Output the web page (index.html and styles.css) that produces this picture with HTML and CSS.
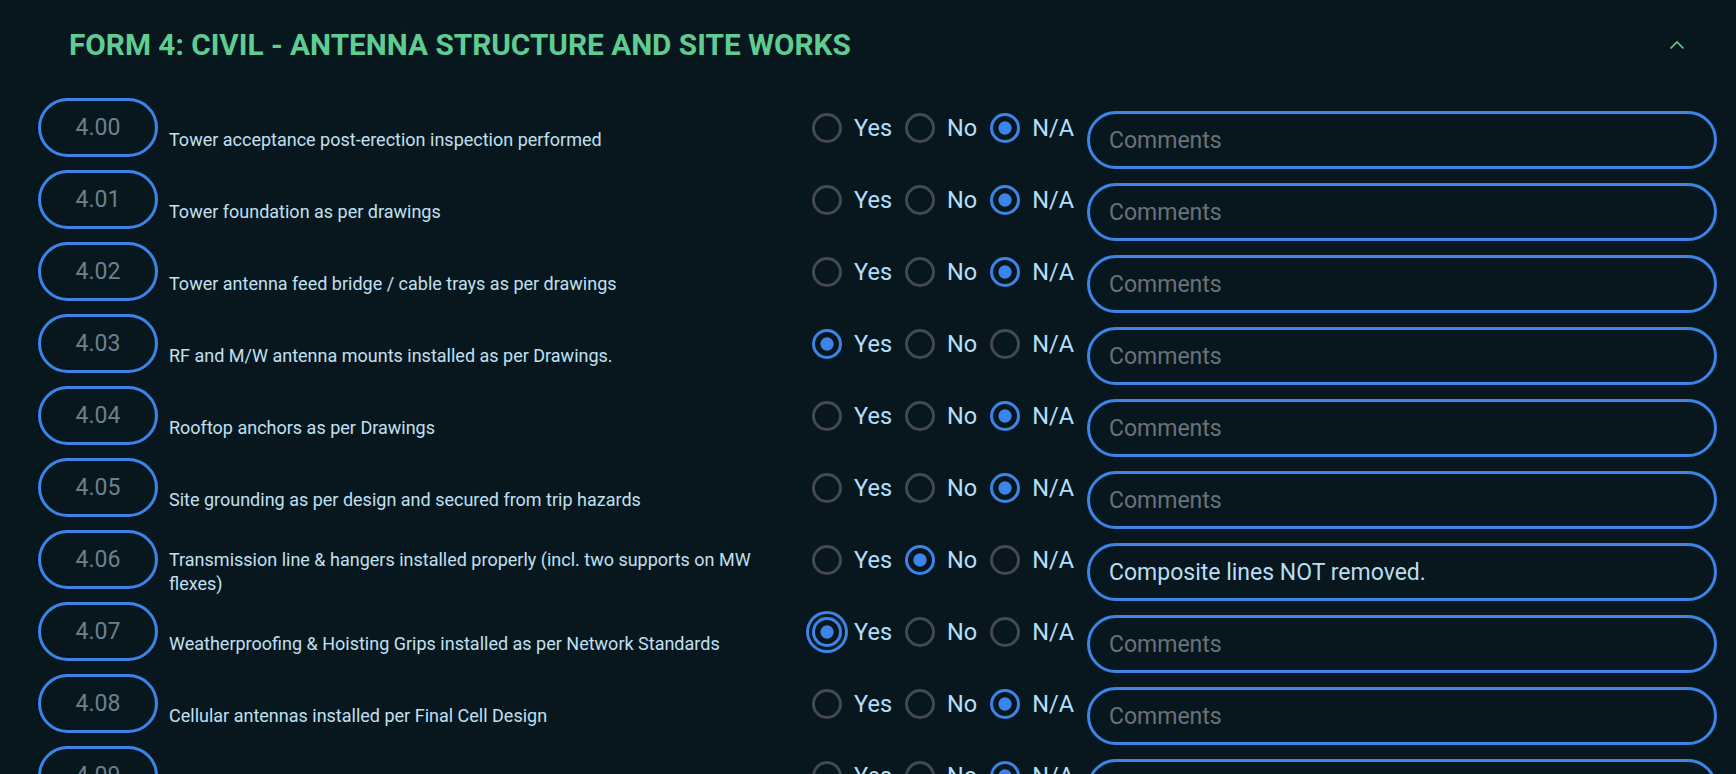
FILE: index.html
```html
<!DOCTYPE html>
<html lang="en">
<head>
<meta charset="utf-8">
<title>Form 4: Civil - Antenna Structure and Site Works</title>
<link rel="stylesheet" href="styles.css">
</head>
<body>
<section class="form">
  <header class="form-header">
    <h1 class="form-title">FORM 4: CIVIL - ANTENNA STRUCTURE AND SITE WORKS</h1>
    <svg class="chevron" width="16" height="10" viewBox="0 0 16 10"><path d="M1.5 8.5 L8 2 L14.5 8.5" fill="none" stroke="#5fcd92" stroke-width="1.6"/></svg>
  </header>
  <div class="rows">
    <div class="row">
      <div class="num">4.00</div>
      <div class="desc"><span>Tower acceptance post-erection inspection performed</span></div>
      <div class="choices">
        <label class="opt"><input type="radio" name="r0"><span>Yes</span></label>
        <label class="opt"><input type="radio" name="r0"><span>No</span></label>
        <label class="opt"><input type="radio" name="r0" checked><span>N/A</span></label>
      </div>
      <input class="comment" type="text" placeholder="Comments">
    </div>
    <div class="row">
      <div class="num">4.01</div>
      <div class="desc"><span>Tower foundation as per drawings</span></div>
      <div class="choices">
        <label class="opt"><input type="radio" name="r1"><span>Yes</span></label>
        <label class="opt"><input type="radio" name="r1"><span>No</span></label>
        <label class="opt"><input type="radio" name="r1" checked><span>N/A</span></label>
      </div>
      <input class="comment" type="text" placeholder="Comments">
    </div>
    <div class="row">
      <div class="num">4.02</div>
      <div class="desc"><span>Tower antenna feed bridge / cable trays as per drawings</span></div>
      <div class="choices">
        <label class="opt"><input type="radio" name="r2"><span>Yes</span></label>
        <label class="opt"><input type="radio" name="r2"><span>No</span></label>
        <label class="opt"><input type="radio" name="r2" checked><span>N/A</span></label>
      </div>
      <input class="comment" type="text" placeholder="Comments">
    </div>
    <div class="row">
      <div class="num">4.03</div>
      <div class="desc"><span>RF and M/W antenna mounts installed as per Drawings.</span></div>
      <div class="choices">
        <label class="opt"><input type="radio" name="r3" checked><span>Yes</span></label>
        <label class="opt"><input type="radio" name="r3"><span>No</span></label>
        <label class="opt"><input type="radio" name="r3"><span>N/A</span></label>
      </div>
      <input class="comment" type="text" placeholder="Comments">
    </div>
    <div class="row">
      <div class="num">4.04</div>
      <div class="desc"><span>Rooftop anchors as per Drawings</span></div>
      <div class="choices">
        <label class="opt"><input type="radio" name="r4"><span>Yes</span></label>
        <label class="opt"><input type="radio" name="r4"><span>No</span></label>
        <label class="opt"><input type="radio" name="r4" checked><span>N/A</span></label>
      </div>
      <input class="comment" type="text" placeholder="Comments">
    </div>
    <div class="row">
      <div class="num">4.05</div>
      <div class="desc"><span>Site grounding as per design and secured from trip hazards</span></div>
      <div class="choices">
        <label class="opt"><input type="radio" name="r5"><span>Yes</span></label>
        <label class="opt"><input type="radio" name="r5"><span>No</span></label>
        <label class="opt"><input type="radio" name="r5" checked><span>N/A</span></label>
      </div>
      <input class="comment" type="text" placeholder="Comments">
    </div>
    <div class="row">
      <div class="num">4.06</div>
      <div class="desc"><span>Transmission line &amp; hangers installed properly (incl. two supports on MW flexes)</span></div>
      <div class="choices">
        <label class="opt"><input type="radio" name="r6"><span>Yes</span></label>
        <label class="opt"><input type="radio" name="r6" checked><span>No</span></label>
        <label class="opt"><input type="radio" name="r6"><span>N/A</span></label>
      </div>
      <input class="comment" type="text" placeholder="Comments" value="Composite lines NOT removed.">
    </div>
    <div class="row">
      <div class="num">4.07</div>
      <div class="desc"><span>Weatherproofing &amp; Hoisting Grips installed as per Network Standards</span></div>
      <div class="choices">
        <label class="opt"><input class="focused" type="radio" name="r7" checked><span>Yes</span></label>
        <label class="opt"><input type="radio" name="r7"><span>No</span></label>
        <label class="opt"><input type="radio" name="r7"><span>N/A</span></label>
      </div>
      <input class="comment" type="text" placeholder="Comments">
    </div>
    <div class="row">
      <div class="num">4.08</div>
      <div class="desc"><span>Cellular antennas installed per Final Cell Design</span></div>
      <div class="choices">
        <label class="opt"><input type="radio" name="r8"><span>Yes</span></label>
        <label class="opt"><input type="radio" name="r8"><span>No</span></label>
        <label class="opt"><input type="radio" name="r8" checked><span>N/A</span></label>
      </div>
      <input class="comment" type="text" placeholder="Comments">
    </div>
    <div class="row">
      <div class="num">4.09</div>
      <div class="desc"><span>Microwave antennas installed per Final Link Design</span></div>
      <div class="choices">
        <label class="opt"><input type="radio" name="r9"><span>Yes</span></label>
        <label class="opt"><input type="radio" name="r9"><span>No</span></label>
        <label class="opt"><input type="radio" name="r9" checked><span>N/A</span></label>
      </div>
      <input class="comment" type="text" placeholder="Comments">
    </div>
  </div>
</section>
</body>
</html>
```

FILE: styles.css
```css
html, body {
  margin: 0;
  padding: 0;
  background: #08171e;
}

body {
  font-family: Roboto, "Liberation Sans", sans-serif;
  color: #bfe0f2;
  overflow: hidden;
  height: 774px;
}

.form-header {
  height: 88px;
  display: flex;
  align-items: center;
  justify-content: space-between;
  padding: 0 51px 0 69px;
}

.form-title {
  margin: 0;
  font-size: 29.75px;
  font-weight: 700;
  color: #5fcd92;
  letter-spacing: 0;
}

.chevron {
  display: block;
  margin-top: 1px;
}

.rows {
  padding: 10px 19px 0 38px;
}

.row {
  display: flex;
  align-items: flex-start;
  height: 72px;
}

.num {
  flex: 0 0 120px;
  height: 59px;
  box-sizing: border-box;
  border: 3px solid #3d84e8;
  border-radius: 30px;
  display: flex;
  align-items: center;
  justify-content: center;
  font-size: 23px;
  color: #6d808c;
}

.desc {
  flex: 1 1 auto;
  min-width: 0;
  margin: 13px 13px 0 11px;
  height: 58px;
  display: flex;
  align-items: center;
  font-size: 18px;
  line-height: 24px;
  color: #c0e0f2;
}

.choices {
  display: flex;
  align-items: center;
  gap: 13px;
  height: 59px;
  flex: 0 0 auto;
}

.opt {
  display: flex;
  align-items: center;
  gap: 12px;
  font-size: 23.5px;
  color: #b3e0fa;
}

.opt input {
  -webkit-appearance: none;
  appearance: none;
  margin: 0;
  width: 30px;
  height: 30px;
  box-sizing: border-box;
  border: 3px solid #44494e;
  border-radius: 50%;
  background: transparent;
}

.opt input:checked {
  border-color: #3d84e8;
  background: radial-gradient(circle, #3d84e8 0 6.2px, transparent 7px);
}

.opt input.focused {
  box-shadow: 0 0 0 3px #08171e, 0 0 0 6px #3d84e8;
}

.comment {
  flex: 0 0 630px;
  width: 630px;
  height: 58px;
  margin: 13px 0 0 13px;
  box-sizing: border-box;
  border: 3px solid #3d84e8;
  border-radius: 29px;
  background: transparent;
  padding: 0 19px;
  font-family: Roboto, "Liberation Sans", sans-serif;
  font-size: 23px;
  color: #b9def4;
  outline: none;
}

.comment::placeholder {
  color: #6a7178;
  opacity: 1;
}
```
